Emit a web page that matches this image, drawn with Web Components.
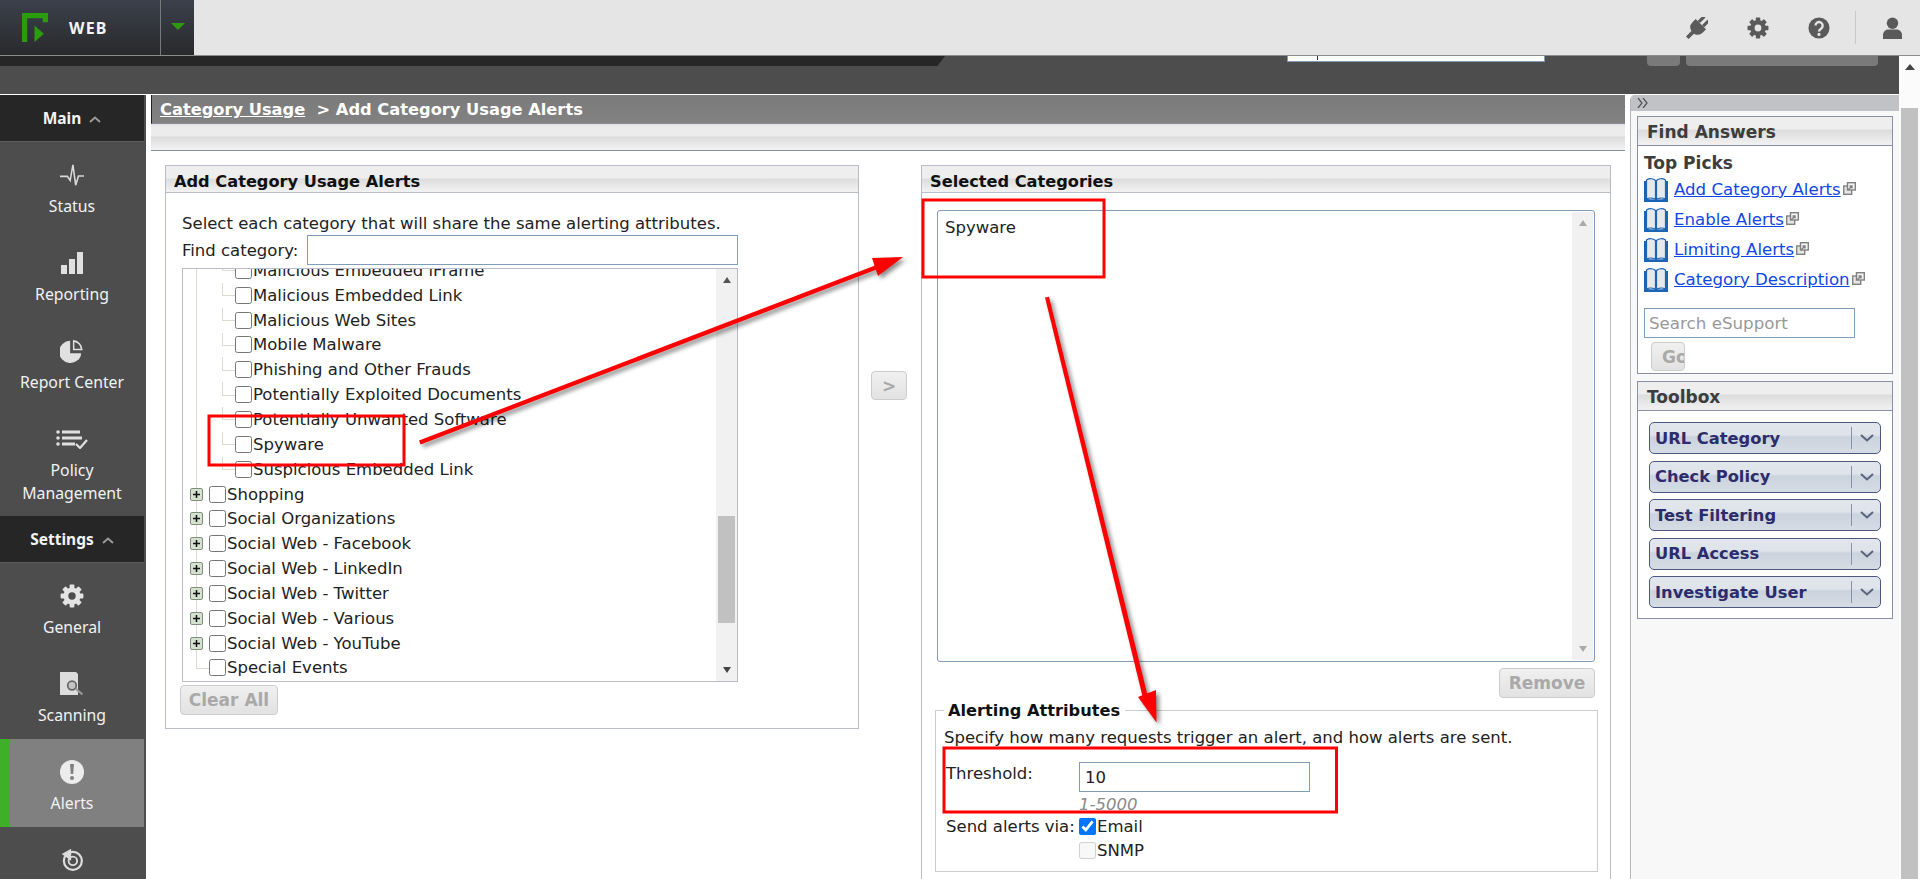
<!DOCTYPE html>
<html>
<head>
<meta charset="utf-8">
<title>Add Category Usage Alerts</title>
<style>
  html, body { margin: 0; height: 100%; overflow: hidden; background: #fff; }
  body { font: 16.5px "DejaVu Sans", Verdana, sans-serif; color: #222; }
</style>
</head>
<body>
<app-shell>
  <top-bar slot="top"></top-bar>
  <head-band slot="band"></head-band>
  <side-nav slot="nav">
    <side-head label="Main"></side-head>
    <side-item label="Status" icon="status"></side-item>
    <side-item label="Reporting" icon="reporting"></side-item>
    <side-item label="Report Center" icon="pie"></side-item>
    <side-item label="Policy Management" icon="policy" tall></side-item>
    <side-head label="Settings"></side-head>
    <side-item label="General" icon="gear"></side-item>
    <side-item label="Scanning" icon="scan"></side-item>
    <side-item label="Alerts" icon="alert" active></side-item>
    <side-item label="" icon="restore"></side-item>
  </side-nav>
  <crumb-bar slot="crumb"></crumb-bar>
  <alert-form slot="main"></alert-form>
  <help-rail slot="rail">
    <help-box title="Find Answers" style="height:258px">
      <h4 class="picks">Top Picks</h4>
      <help-link label="Add Category Alerts"></help-link>
      <help-link label="Enable Alerts"></help-link>
      <help-link label="Limiting Alerts"></help-link>
      <help-link label="Category Description"></help-link>
      <search-box></search-box>
    </help-box>
    <help-box title="Toolbox" style="height:238px">
      <tool-list>
        <tool-button label="URL Category"></tool-button>
        <tool-button label="Check Policy"></tool-button>
        <tool-button label="Test Filtering"></tool-button>
        <tool-button label="URL Access"></tool-button>
        <tool-button label="Investigate User"></tool-button>
      </tool-list>
    </help-box>
  </help-rail>
  <scroll-bar slot="pagebar" up="#444" down="#444" pad="30" thumb="781" wide style="--track:#fbfbfb"></scroll-bar>
</app-shell>
<mark-up></mark-up>

<script>
(function () {
  const SANS = '"DejaVu Sans", Verdana, sans-serif';
  const NAV_FONT = '"Noto Sans", "Open Sans", sans-serif';

  function gear(fill, hole) {
    let teeth = "";
    for (let a = 0; a < 360; a += 45) {
      teeth += `<rect x="9.6" y="0.6" width="4.8" height="6" rx="0.8" transform="rotate(${a} 12 12)"/>`;
    }
    return `<svg viewBox="0 0 24 24" fill="${fill}">${teeth}<circle cx="12" cy="12" r="8.6"/><circle cx="12" cy="12" r="3.7" fill="${hole}"/></svg>`;
  }

  const NAV_ICONS = {
    status: `<svg viewBox="0 0 26 24" fill="none" stroke="#d9d9d9" stroke-width="1.7"><path d="M0 13.5h8l3 4.5 3-17 3 22 3-10h6"/></svg>`,
    reporting: `<svg viewBox="0 0 24 24" fill="#e0e0e0"><rect x="1" y="14" width="6" height="9"/><rect x="9" y="8" width="6" height="15"/><rect x="17" y="1" width="6" height="22"/></svg>`,
    pie: `<svg viewBox="0 0 26 26" fill="#e0e0e0"><path d="M11 2a12 12 0 1 0 12 13.5H11z"/><path d="M14 1.2v11h10.6A11 11 0 0 0 14 1.2zM15.6 3.2a9 9 0 0 1 6.8 7.4h-6.8z"/><path d="M15 17l7.6-.2a12 12 0 0 1-2.6 6z"/></svg>`,
    policy: `<svg viewBox="0 0 32 20" fill="#e0e0e0"><circle cx="2" cy="3" r="1.8"/><circle cx="2" cy="9" r="1.8"/><circle cx="2" cy="15" r="1.8"/><rect x="6" y="1.5" width="18" height="3"/><rect x="6" y="7.5" width="20" height="3"/><rect x="6" y="13.5" width="13" height="3"/><path d="M20 15l4 4 7-8" fill="none" stroke="#e0e0e0" stroke-width="2.2"/></svg>`,
    gear: gear("#e4e4e4", "#4d4d4d"),
    scan: `<svg viewBox="0 0 24 24"><path d="M0 0h16l2 2v21H0z" fill="#dcdcdc"/><circle cx="12" cy="13.500" r="4.300" fill="#c4c4c4" stroke="#666" stroke-width="1.700"/><path d="M15.500 16.500l7 6" stroke="#999" stroke-width="2.200"/></svg>`,
    alert: `<svg viewBox="0 0 24 24"><circle cx="12" cy="12" r="12" fill="#ececec"/><path d="M10 4h4l-.8 10h-2.4z" fill="#808080"/><circle cx="12" cy="18" r="2" fill="#808080"/></svg>`,
    restore: `<svg viewBox="0 0 26 28" fill="none" stroke="#dcdcdc"><circle cx="14" cy="15" r="10.5" stroke-width="2.6"/><circle cx="14" cy="15" r="5" stroke-width="2.2"/><path d="M1 7l11-6v14z" fill="#dcdcdc" stroke="none"/></svg>`
  };

  class AppShell extends HTMLElement {
    connectedCallback() {
      this.attachShadow({ mode: "open" }).innerHTML = `
      <style>
        :host { display: flex; flex-direction: column; width: 1920px; height: 879px; overflow: hidden; }
        .under { flex: 1; display: flex; min-height: 0; }
        .left { width: 1899px; display: flex; flex-direction: column; }
        .cols { flex: 1; display: flex; min-height: 0; }
        .nav { width: 146px; flex: none; }
        .center { width: 1474px; margin-left: 5px; flex: none; display: flex; flex-direction: column; overflow: hidden; }
        .rail { width: 269px; margin-left: 5px; flex: none; }
        ::slotted([slot="pagebar"]) { width: 21px; }
      </style>
      <slot name="top"></slot>
      <div class="under">
        <div class="left">
          <slot name="band"></slot>
          <div class="cols">
            <div class="nav"><slot name="nav"></slot></div>
            <div class="center"><slot name="crumb"></slot><slot name="main"></slot></div>
            <div class="rail"><slot name="rail"></slot></div>
          </div>
        </div>
        <slot name="pagebar"></slot>
      </div>`;
    }
  }

  class TopBar extends HTMLElement {
    connectedCallback() {
      this.attachShadow({ mode: "open" }).innerHTML = `
      <style>
        :host { display: flex; height: 55px; background: #e5e5e5; border-bottom: 1px solid #8c8c8c; }
        .brand { width: 194px; display: flex; background: linear-gradient(#3b404b, #292a2c); }
        .product { width: 160px; border-right: 1px solid #77797c; box-sizing: content-box; position: relative; display: flex; align-items: center; }
        .logo { width: 26px; height: 29px; margin: -1px 0 0 22px; }
        .name { margin: 0 0 0 21px; font: bold 16px ${NAV_FONT}; letter-spacing: 1.2px; color: #f4f4f4; }
        .drop { flex: 1; display: flex; justify-content: center; align-items: center; }
        .drop i { width: 0; height: 0; border: 7px solid transparent; border-top: 7px solid #2f9a10; border-bottom: 0; margin-top: -3px; }
        .tools { flex: 1; display: flex; justify-content: flex-end; align-items: center; color: #5a5a5a; padding-right: 18px; }
        svg.t { width: 22px; height: 22px; display: block; margin-right: 39px; }
        .sep { width: 1px; height: 33px; background: #c8c8c8; margin: 0 27px 0 -14px; }
        svg.u { width: 19px; height: 22px; display: block; }
      </style>
      <div class="brand">
        <div class="product">
          <svg class="logo" viewBox="0 0 25 28" fill="#2b9d0c"><path d="M0 0h25v9h-5V5H5v23H0z"/><path d="M12 12l9 8-9 8z"/></svg>
          <p class="name">WEB</p>
        </div>
        <div class="drop"><i></i></div>
      </div>
      <div class="tools">
        <svg class="t" viewBox="0 0 24 24" fill="#5a5a5a"><g transform="rotate(45 12 12)"><rect x="7" y="-3" width="3.4" height="9" rx="1"/><rect x="13.6" y="-3" width="3.4" height="9" rx="1"/><path d="M4 6h16v5a8 8 0 0 1-6 7.7V27h-4v-8.3A8 8 0 0 1 4 11z"/></g></svg>
        ${gear("#5a5a5a", "#e5e5e5").replace("<svg ", '<svg class="t" ')}
        <svg class="t" viewBox="0 0 24 24"><circle cx="12" cy="12" r="11.5" fill="#5a5a5a"/><path d="M8.2 9.4a3.9 3.9 0 1 1 6 3.3c-1.4.9-2.2 1.5-2.2 3" fill="none" stroke="#e5e5e5" stroke-width="2.6"/><circle cx="12" cy="19" r="1.7" fill="#e5e5e5"/></svg>
        <div class="sep"></div>
        <svg class="u" viewBox="0 0 20 23" fill="#5a5a5a"><circle cx="10" cy="6.5" r="6"/><path d="M0 23v-4c0-4 3-6 6-6h8c3 0 6 2 6 6v4z"/></svg>
      </div>`;
    }
  }

  class HeadBand extends HTMLElement {
    connectedCallback() {
      this.attachShadow({ mode: "open" }).innerHTML = `
      <style>
        :host { display: flex; align-items: flex-start; height: 38px; background: #4d4d4d; border-bottom: 1px solid #fff; flex: none; }
        .strip { width: 945px; height: 10px; background: #262626; clip-path: polygon(0 0, 100% 0, 99.2% 100%, 0 100%); }
        .field { width: 256px; height: 5px; margin-left: 342px; background: #fff; border: 1px solid #7f9db9; border-top: 0; }
        .field i { display: block; width: 1px; height: 4px; margin-left: 29px; background: #333; }
        .btn { height: 10px; background: #7a7a7a; border-radius: 0 0 4px 4px; margin-left: 6px; }
      </style>
      <div class="strip"></div>
      <div class="field"><i></i></div>
      <div class="btn" style="width:33px;margin-left:102px"></div>
      <div class="btn" style="width:192px"></div>`;
    }
  }

  class SideNav extends HTMLElement {
    connectedCallback() {
      this.attachShadow({ mode: "open" }).innerHTML = `
      <style>
        :host { display: block; height: 100%; background: #4d4d4d; overflow: hidden; font: 15.8px ${NAV_FONT}; color: #f2f2f2; }
      </style><slot></slot>`;
    }
  }

  class SideHead extends HTMLElement {
    connectedCallback() {
      this.attachShadow({ mode: "open" }).innerHTML = `
      <style>
        :host { display: flex; align-items: center; justify-content: center; gap: 8px; width: 144px; height: 47px; background: #262626; border-bottom: 1px solid #5c5c5c; box-sizing: border-box; font-weight: bold; font-size: 15.5px; color: #f4f4f4; }
        svg { width: 12px; height: 7px; margin-top: 2px; }
      </style>
      <span>${this.getAttribute("label")}</span>
      <svg viewBox="0 0 12 7" fill="none" stroke="#9a9a9a" stroke-width="2"><path d="M1 6l5-4.5L11 6"/></svg>`;
    }
  }

  class SideItem extends HTMLElement {
    connectedCallback() {
      this.attachShadow({ mode: "open" }).innerHTML = `
      <style>
        :host { display: flex; flex-direction: column; align-items: center; box-sizing: border-box; width: 144px; height: ${this.hasAttribute("tall") ? 110 : 88}px; padding-top: 20px; text-align: center; line-height: 23px; }
        :host([active]) { background: #808080; border-left: 10px solid #3fae29; padding-right: 10px; width: 144px; }
        .ico { height: 26px; display: flex; align-items: center; justify-content: center; margin-bottom: 7px; }
        svg { display: block; width: ${this.getAttribute("icon") === "policy" ? 32 : 24}px; height: ${this.getAttribute("icon") === "policy" ? 20 : 24}px; }
        .lab { width: 130px; }
      </style>
      <div class="ico">${NAV_ICONS[this.getAttribute("icon")]}</div>
      <div class="lab">${this.getAttribute("label")}</div>`;
    }
  }

  class CrumbBar extends HTMLElement {
    connectedCallback() {
      this.attachShadow({ mode: "open" }).innerHTML = `
      <style>
        :host { display: block; flex: none; }
        .bar { height: 29px; box-sizing: border-box; padding: 0 0 0 8px; border-left: 1px solid #222; background: linear-gradient(#7a7a7a, #828282); font: bold 16.25px/29px ${SANS}; color: #fff; border-bottom: 1px solid #8c8f99; white-space: pre; }
        a { color: #fff; text-decoration: underline; }
        .tools { height: 27px; box-sizing: border-box; border-bottom: 1px solid #8a8f9e; background: linear-gradient(#dedede 0, #ececec 3px, #ececec 12px, #dcdcdc 13px, #f2f2f2 100%); }
      </style>
      <div class="bar"><a>Category Usage</a>  &gt; Add Category Usage Alerts</div>
      <div class="tools"></div>`;
    }
  }

  class PanelBox extends HTMLElement {
    connectedCallback() {
      this.attachShadow({ mode: "open" }).innerHTML = `
      <style>
        :host { display: block; box-sizing: border-box; border: 1px solid #b8bccb; background: #fff; }
        h3 { margin: 0; height: 27px; box-sizing: border-box; padding: 4px 0 0 8px; font: bold 16.2px/24px ${SANS}; color: #111; border-bottom: 1px solid #b8bccb; background: linear-gradient(#eee 0, #eee 12px, #dcdcdc 13px, #f2f2f2 100%); overflow: hidden; }
      </style>
      <h3>${this.getAttribute("title")}</h3><slot></slot>`;
    }
  }

  class ScrollBar extends HTMLElement {
    connectedCallback() {
      const pad = this.getAttribute("pad") || 0;
      const thumb = this.getAttribute("thumb");
      const size = this.hasAttribute("wide") ? 5 : 4.5;
      this.attachShadow({ mode: "open" }).innerHTML = `
      <style>
        :host { display: flex; flex-direction: column; align-items: stretch; box-sizing: border-box; background: var(--track, #f1f1f1); }
        .arrow { height: 22px; flex: none; display: flex; align-items: center; justify-content: center; }
        .arrow i { width: 0; height: 0; border: ${size}px solid transparent; }
        .up i { border-bottom: 6px solid ${this.getAttribute("up")}; border-top: 0; }
        .down i { border-top: 6px solid ${this.getAttribute("down")}; border-bottom: 0; }
        .thumb { margin: ${pad}px 2px 0; height: ${thumb}px; background: #c1c1c1; flex: none; }
        .fill { flex: 1; }
      </style>
      <div class="arrow up"><i></i></div>
      ${thumb ? `<div class="thumb"></div>` : ""}
      <div class="fill"></div>
      <div class="arrow down"><i></i></div>`;
    }
  }

  class FlatButton extends HTMLElement {
    connectedCallback() {
      this.attachShadow({ mode: "open" }).innerHTML = `
      <style>
        :host { display: inline-flex; align-items: center; justify-content: center; box-sizing: border-box; height: 30px; border: 1px solid #ccc; border-radius: 4px; background: linear-gradient(#f0f0f0, #e2e2e2); font: bold 17px ${SANS}; color: #a9a9a9; overflow: hidden; }
      </style><slot></slot>`;
    }
  }

  class TreeRow extends HTMLElement {
    connectedCallback() {
      const kind = this.getAttribute("kind");
      let lead = "";
      if (kind === "child") {
        lead = `<span class="v" style="left:13px"></span><span class="tick"></span><span class="h"></span><span class="gap" style="width:52px"></span>`;
      } else if (kind === "plus") {
        lead = `<span class="v" style="left:13px"></span><svg class="plus" viewBox="0 0 13 13"><rect x="0.5" y="0.5" width="12" height="12" rx="1.5" fill="#d5e0d0" stroke="#7f8f7a"/><path d="M3 6.5h7M6.5 3v7" stroke="#111" stroke-width="1.5"/></svg><span class="gap" style="width:26px"></span>`;
      } else {
        lead = `<span class="v last" style="left:13px"></span><span class="h2"></span><span class="gap" style="width:26px"></span>`;
      }
      this.attachShadow({ mode: "open" }).innerHTML = `
      <style>
        :host { display: flex; align-items: center; position: relative; height: 24.85px; white-space: nowrap; }
        .gap { flex: none; }
        .v { position: absolute; top: 0; bottom: 0; width: 1px; background: #dedad0; }
        .v.last { bottom: 50%; }
        .tick { position: absolute; left: 39px; top: 0; height: 50%; width: 1px; background: #dedad0; }
        .h { position: absolute; left: 39px; top: 50%; width: 13px; height: 1px; background: #dedad0; }
        .h2 { position: absolute; left: 13px; top: 50%; width: 13px; height: 1px; background: #dedad0; }
        .plus { position: absolute; left: 7px; top: 6px; width: 13px; height: 13px; }
        input { width: 17px; height: 17px; margin: 0 1px 0 0; flex: none; }
      </style>
      ${lead}<input type="checkbox"><span>${this.getAttribute("label")}</span>`;
    }
  }

  class CatTree extends HTMLElement {
    connectedCallback() {
      const kids = ["Malicious Embedded iFrame", "Malicious Embedded Link", "Malicious Web Sites", "Mobile Malware", "Phishing and Other Frauds", "Potentially Exploited Documents", "Potentially Unwanted Software", "Spyware", "Suspicious Embedded Link"];
      const tops = ["Shopping", "Social Organizations", "Social Web - Facebook", "Social Web - LinkedIn", "Social Web - Twitter", "Social Web - Various", "Social Web - YouTube"];
      const rows = kids.map((k) => `<tree-row kind="child" label="${k}"></tree-row>`)
        .concat(tops.map((k) => `<tree-row kind="plus" label="${k}"></tree-row>`))
        .concat(`<tree-row kind="leaf" label="Special Events"></tree-row>`).join("");
      this.attachShadow({ mode: "open" }).innerHTML = `
      <style>
        :host { display: flex; box-sizing: border-box; width: 556px; height: 414px; border: 1px solid #b8bccb; overflow: hidden; }
        .list { flex: 1; margin-top: -11px; color: #222; }
        scroll-bar { width: 21px; }
      </style>
      <div class="list">${rows}</div>
      <scroll-bar up="#555" down="#444" pad="225" thumb="107"></scroll-bar>`;
    }
  }

  class AlertForm extends HTMLElement {
    connectedCallback() {
      this.attachShadow({ mode: "open" }).innerHTML = `
      <style>
        :host { display: flex; align-items: flex-start; padding: 14px 0 0 14px; flex: 1; min-height: 0; }
        .l { width: 694px; height: 564px; flex: none; }
        .intro { padding: 20px 0 0 16px; line-height: 22px; white-space: nowrap; }
        .find { display: flex; align-items: center; height: 30px; margin: 0 0 3px 16px; }
        .find span { width: 125px; flex: none; }
        input.txt { box-sizing: border-box; border: 1px solid #7f9db9; outline: 0; font: 16.5px ${SANS}; padding: 0 3px 0 4px; color: #222; background: #fff; margin: 0; }
        .find input { width: 431px; height: 30px; }
        cat-tree { margin-left: 16px; }
        .l flat-button { width: 98px; margin: 3px 0 0 14px; display: flex; }
        .mid { width: 62px; flex: none; padding: 206px 0 0 12px; box-sizing: border-box; }
        .mid flat-button { width: 36px; height: 29px; font-size: 17px; }
        .r { width: 690px; height: 800px; flex: none; }
        .sel { display: flex; width: 658px; height: 452px; box-sizing: border-box; margin: 17px 0 0 15px; border: 1px solid #7f9db9; border-radius: 3px; }
        .sel .val { flex: 1; padding: 6px 7px; line-height: 22px; }
        .sel scroll-bar { width: 21px; margin: 1px 1px 1px 0; }
        .rm { display: flex; justify-content: flex-end; width: 673px; margin-top: 6px; }
        .rm flat-button { width: 96px; }
        fieldset { width: 663px; height: 171px; box-sizing: border-box; margin: 3px 0 0 13px; padding: 3px 8px 0 8px; border: 1px solid #ccc; }
        legend { font: bold 16.2px ${SANS}; color: #111; padding: 0 5px 0 4px; margin-left: 0; }
        .desc { line-height: 22px; height: 34px; margin-top: 4px; white-space: nowrap; }
        .grid { display: grid; grid-template-columns: 133px 1fr; padding-left: 2px; white-space: nowrap; }
        .grid input.txt { width: 231px; height: 30px; margin: 1px 0 3.5px; display: block; padding-left: 5px; }
        .hint { font-style: italic; color: #8a8a8a; font-size: 16.5px; line-height: 18px; height: 18.5px; }
        .opt { display: flex; align-items: center; height: 24px; }
        .opt input { width: 17px; height: 17px; margin: 0 1px 0 0; }
        .lab { padding-top: 3px; }
      </style>
      <panel-box class="l" title="Add Category Usage Alerts">
        <div class="intro">Select each category that will share the same alerting attributes.</div>
        <div class="find"><span>Find category:</span><input class="txt"></div>
        <cat-tree></cat-tree>
        <flat-button>Clear All</flat-button>
      </panel-box>
      <div class="mid"><flat-button>&gt;</flat-button></div>
      <panel-box class="r" title="Selected Categories">
        <div class="sel"><div class="val">Spyware</div><scroll-bar up="#aaa" down="#aaa"></scroll-bar></div>
        <div class="rm"><flat-button>Remove</flat-button></div>
        <fieldset>
          <legend>Alerting Attributes</legend>
          <div class="desc">Specify how many requests trigger an alert, and how alerts are sent.</div>
          <div class="grid">
            <div class="lab">Threshold:</div>
            <div><input class="txt" value="10"><div class="hint">1-5000</div></div>
            <div class="opt">Send alerts via:</div>
            <div>
              <div class="opt"><input type="checkbox" checked>Email</div>
              <div class="opt"><input type="checkbox" disabled>SNMP</div>
            </div>
          </div>
        </fieldset>
      </panel-box>`;
    }
  }

  class HelpRail extends HTMLElement {
    connectedCallback() {
      this.attachShadow({ mode: "open" }).innerHTML = `
      <style>
        :host { display: block; box-sizing: border-box; height: 100%; background: #f8f8f8; border-left: 1px solid #b4b4c4; border-radius: 5px 0 0 0; overflow: hidden; }
        .tab { height: 16px; background: #c1c2c6; color: #555; display: flex; align-items: center; padding-left: 6px; }
        svg { width: 11px; height: 10px; }
        .boxes { display: flex; flex-direction: column; gap: 7px; padding: 5px 0 0 6px; }
      </style>
      <div class="tab"><svg viewBox="0 0 11 10" fill="none" stroke="#555" stroke-width="1.3"><path d="M1 0l4 5-4 5M6 0l4 5-4 5"/></svg></div>
      <div class="boxes"><slot></slot></div>`;
    }
  }

  class HelpBox extends HTMLElement {
    connectedCallback() {
      this.attachShadow({ mode: "open" }).innerHTML = `
      <style>
        :host { display: block; box-sizing: border-box; width: 256px; border: 1px solid #8a8fa5; background: #fff; }
        h3 { margin: 0; height: 29px; box-sizing: border-box; padding: 2px 0 0 9px; font: bold 17px/26px ${SANS}; color: #3d3d3d; border-bottom: 1px solid #8a8fa5; background: linear-gradient(#eee 0, #eee 12px, #dcdcdc 13px, #f2f2f2 100%); }
        ::slotted(h4) { margin: 0; padding: 6px 0 0 6px; height: 23px; box-sizing: content-box; font: bold 17px/22px ${SANS}; color: #3d3d3d; }
      </style>
      <h3>${this.getAttribute("title")}</h3><slot></slot>`;
    }
  }

  class HelpLink extends HTMLElement {
    connectedCallback() {
      this.attachShadow({ mode: "open" }).innerHTML = `
      <style>
        :host { display: flex; align-items: center; height: 30px; padding-left: 6px; }
        .book { width: 24px; height: 24px; flex: none; margin-right: 6px; }
        a { color: #0f47e6; text-decoration: underline; font-size: 16.6px; white-space: nowrap; margin-top: -2px; }
        .ext { width: 13px; height: 13px; flex: none; margin: -3px 0 0 2px; }
      </style>
      <svg class="book" viewBox="0 0 24 24"><path d="M0 3h2v18l9 .5h2l9-.5V3h2v21H0z" fill="#1c64b4"/><path d="M2.5 2c3-2 7-1.500 9 .5v19c-2-1.500-6-2-9-.5z" fill="#e6e8ea" stroke="#1c64b4" stroke-width="1.200"/><path d="M21.500 2c-3-2-7-1.500-9 .5v19c2-1.500 6-2 9-.5z" fill="#e6e8ea" stroke="#1c64b4" stroke-width="1.200"/></svg>
      <a>${this.getAttribute("label")}</a>
      <svg class="ext" viewBox="0 0 13 13" fill="none" stroke="#808080" stroke-width="1.400"><rect x="0.700" y="4" width="8" height="8.300" fill="#e6e6e6"/><rect x="4.500" y="0.700" width="7.800" height="7.300" fill="#f4f4f4"/><path d="M5 8l4-4M6.500 4H9v2.500"/></svg>`;
    }
  }

  class SearchBox extends HTMLElement {
    connectedCallback() {
      this.attachShadow({ mode: "open" }).innerHTML = `
      <style>
        :host { display: block; padding: 13px 0 0 6px; }
        input { display: block; box-sizing: border-box; width: 211px; height: 30px; margin: 0; padding: 0 4px; border: 1px solid #7f9db9; outline: 0; font: 16.7px ${SANS}; }
        input::placeholder { color: #999; opacity: 1; }
        flat-button { display: flex; justify-content: flex-start; padding-left: 10px; width: 34px; height: 29px; margin: 4px 0 0 7px; white-space: nowrap; }
      </style>
      <input placeholder="Search eSupport"><flat-button>Go</flat-button>`;
    }
  }

  class ToolList extends HTMLElement {
    connectedCallback() {
      this.attachShadow({ mode: "open" }).innerHTML = `
      <style>:host { display: flex; flex-direction: column; gap: 6.500px; padding: 11px 0 0 11px; }</style><slot></slot>`;
    }
  }

  class ToolButton extends HTMLElement {
    connectedCallback() {
      this.attachShadow({ mode: "open" }).innerHTML = `
      <style>
        :host { display: flex; align-items: center; box-sizing: border-box; width: 232px; height: 32px; padding-left: 5px; border: 1px solid #4d5880; border-radius: 5px; background: linear-gradient(#e1e5ec 0, #dfe3ea 12px, #cbd3dd 14px, #d5dce4 100%); font: bold 16.3px ${SANS}; color: #2c2c6c; }
        span { flex: 1; white-space: nowrap; }
        i { width: 1px; height: 22px; background: #8a92a8; margin-right: 8px; }
        svg { width: 14px; height: 8px; margin-right: 6px; }
      </style>
      <span>${this.getAttribute("label")}</span><i></i>
      <svg viewBox="0 0 14 8" fill="none" stroke="#5a6480" stroke-width="2"><path d="M1 1l6 5.500 6-5.500"/></svg>`;
    }
  }

  class MarkUp extends HTMLElement {
    connectedCallback() {
      this.attachShadow({ mode: "open" }).innerHTML = `
      <style>
        :host { position: fixed; left: 0; top: 0; width: 1920px; height: 879px; pointer-events: none; }
        svg { display: block; width: 1920px; height: 879px; }
      </style>
      <svg viewBox="0 0 1920 879">
        <g fill="none" stroke="#f00" stroke-width="3">
          <rect x="209" y="416" width="195" height="49"/>
          <rect x="923" y="200" width="181" height="77"/>
          <rect x="944" y="748" width="392.500" height="64"/>
        </g>
        <g fill="#f00" style="filter:drop-shadow(3px 3px 2px rgba(0,0,0,.45))">
          <path d="M419 440.500L875 265.500l1.600 4L420.500 444.500z"/>
          <path d="M903 257L872 258l6 18z"/>
          <path d="M1045 297.500l4-.8L1147.500 695l-5 1.200z"/>
          <path d="M1156.500 722.500L1138 697l18-7z"/>
        </g>
      </svg>`;
    }
  }

  const defs = { "app-shell": AppShell, "top-bar": TopBar, "head-band": HeadBand, "side-nav": SideNav, "side-head": SideHead, "side-item": SideItem, "crumb-bar": CrumbBar, "panel-box": PanelBox, "scroll-bar": ScrollBar, "flat-button": FlatButton, "tree-row": TreeRow, "cat-tree": CatTree, "alert-form": AlertForm, "help-rail": HelpRail, "help-box": HelpBox, "help-link": HelpLink, "search-box": SearchBox, "tool-list": ToolList, "tool-button": ToolButton, "mark-up": MarkUp };
  Object.keys(defs).forEach((k) => customElements.define(k, defs[k]));
})();
</script>
</body>
</html>
